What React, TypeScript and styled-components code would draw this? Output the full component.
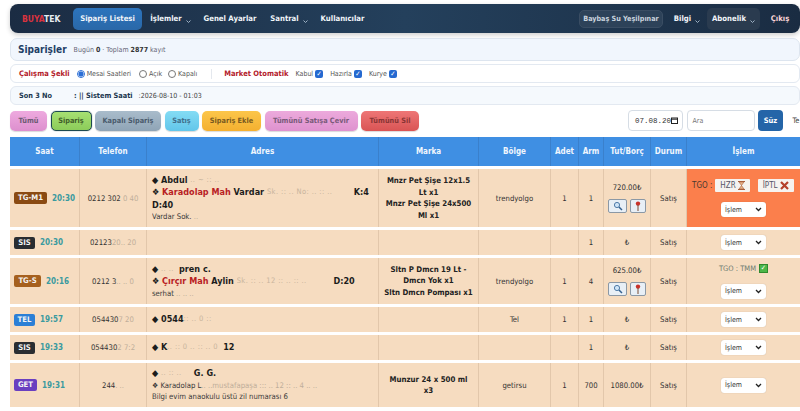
import React from "react";
import styled, { createGlobalStyle } from "styled-components";

const Global = createGlobalStyle`
  html, body { margin: 0; padding: 0; background: #fff; overflow: hidden; height: 411px; }
  body { font-family: "DejaVu Sans Condensed", "DejaVu Sans", Tahoma, sans-serif; font-size: 9px; color: #222; }
  * { box-sizing: border-box; }
`;
const Page = styled.div`
  width: 800px; height: 411px; overflow: hidden; padding: 4px 0 0 10px;
  display: flex; flex-direction: column;
`;
const Nav = styled.nav`
  width: 790px; height: 29px; flex: none; border-radius: 8px;
  background: linear-gradient(90deg, #1b2c43 0%, #24405c 50%, #1a2c42 100%);
  box-shadow: 0 2px 5px rgba(0,0,0,.2);
  display: flex; align-items: center; padding: 0 0 0 12px; color: #f2f6fa; font-weight: 700;
  font-size: 7.7px;
`;
const Logo = styled.div`font-size: 8.5px; font-weight: 700; color: #e8edf2; width: 51px; flex: none; span { color: #d9333f; }`;
const NavActive = styled.div`
  width: 69px; height: 22px; border-radius: 5px; background: linear-gradient(#2c74bd, #2a68a8);
  display: flex; align-items: center; justify-content: center; margin-right: 3px; flex: none;
`;
const NavItem = styled.div<{ $w: number; $box?: boolean; $red?: boolean }>`
  width: ${p => p.$w}px; height: 22px; display: flex; align-items: center; justify-content: center;
  border-radius: 5px; flex: none; white-space: nowrap;
  ${p => p.$box ? "background: #2a3b4f;" : ""}
  ${p => p.$red ? "color: #fbd5d8;" : ""}
`;
const CaretSvg = styled.svg`margin: 5px 0 0 4px; flex: none;`;
const Caret = () => <CaretSvg width="5" height="3" viewBox="0 0 5 3"><path d="M.5.5l2 2 2-2" fill="none" stroke="#9fb2c5" strokeWidth="1" /></CaretSvg>;
const NavSpacer = styled.div`flex: 1;`;
const UserBox = styled.div`
  width: 84px; height: 18px; border: 1px solid #3a4d63; background: #2d4259; border-radius: 5px; flex: none;
  display: flex; align-items: center; justify-content: center; color: #c9d3de; white-space: nowrap;
  font-weight: 700; font-size: 7.2px; margin-right: 4px;
`;
const Head = styled.div`
  width: 790px; height: 23px; flex: none; margin-top: 5px; border-radius: 7px; border: 1px solid #dde5ef;
  background: #f1f6fd; display: flex; align-items: center; gap: 7px; padding-left: 7px;
  h1 { margin: 0; font-size: 10px; color: #1f3f66; font-weight: 700; }
  span { font-size: 7px; color: #667; }
  b { color: #333; }
`;
const Bar = styled.div<{ $bg?: string }>`
  width: 790px; height: 19px; flex: none; margin-top: 3px; border-radius: 6px; border: 1px solid #e3e9f1;
  background: ${p => p.$bg || "#fff"}; display: flex; align-items: center; padding-left: 8px; font-size: 7px; color: #555;
  white-space: nowrap;
`;
const RedLabel = styled.b`color: #b3202a; font-size: 7.5px;`;
const Radio = styled.span<{ $on?: boolean; $ml: number }>`
  width: 8px; height: 8px; border-radius: 50%; border: 1px solid ${p => p.$on ? "#2c6fd6" : "#777"};
  background: ${p => p.$on ? "radial-gradient(#2c6fd6 55%, #fff 65%)" : "#fff"}; display: inline-block; margin: 0 2px 0 ${p => p.$ml}px; flex: none;
`;
const Check = styled.span<{ $mr: number }>`
  width: 8px; height: 8px; border-radius: 2px; background: #2569d0; color: #fff; font-size: 7px; line-height: 8px; text-align: center;
  display: inline-block; margin: 0 ${p => p.$mr}px 0 2px; flex: none;
`;
const VLine = styled.span`width: 1px; height: 10px; background: #e4e8ee; margin: 0 12px 0 14px; flex: none;`;
const BoldDark = styled.b<{ $w?: number }>`color: #20364f; font-size: 7.3px; ${p => p.$w ? `width: ${p.$w}px;` : ""}`;
const ClockText = styled.span`margin-left: 6px; font-size: 7px; color: #444;`;
const AutoGap = styled.span`width: 7px; flex: none;`;
const Toolbar = styled.div`
  width: 800px; height: 21px; flex: none; margin-top: 5px; display: flex; align-items: center; gap: 3.5px; white-space: nowrap;
`;
const ToolSpace = styled.span`width: 202px; flex: none;`;
const Btn = styled.div<{ $w: number; $bg: string; $fg: string; $sel?: boolean }>`
  width: ${p => p.$w}px; height: 20px; flex: none; border-radius: 5px; background: ${p => p.$bg};
  display: flex; align-items: center; justify-content: center; font-weight: 700; font-size: 7.3px; color: ${p => p.$fg};
  ${p => p.$sel ? "border: 1px solid #1d4a50; box-shadow: 0 0 1px #1d4a50;" : "box-shadow: 0 1px 1px rgba(0,0,0,.15);"}
`;
const DateBox = styled.div`
  width: 55px; height: 21px; border: 1px solid #d6dde5; border-radius: 4px; flex: none; background: #fff;
  display: flex; align-items: center; padding-left: 6px; font-size: 7.5px; color: #333; overflow: hidden;
  font-family: "Liberation Mono", monospace;
`;
const SearchBox = styled.div`
  width: 68px; height: 21px; border: 1px solid #d6dde5; border-radius: 4px; flex: none; background: #fff;
  display: flex; align-items: center; padding-left: 5px; font-size: 7px; color: #777;
`;
const FilterBtn = styled.div`
  width: 25px; height: 21px; background: #2465a8; color: #fff; font-weight: 700; font-size: 7.5px; border-radius: 4px; flex: none;
  display: flex; align-items: center; justify-content: center;
`;
const Truncated = styled.span`font-size: 7.5px; color: #444; margin-left: 6px; flex: none;`;
const TableWrap = styled.div`width: 790px; flex: none; margin-top: 6px;`;
const Table = styled.table`
  width: 790px; table-layout: fixed; border-collapse: separate; border-spacing: 0 3px; margin-top: -3px;
  th { background: #3f8fe3; color: #f0f6fd; font-weight: 700; font-size: 8px; height: 29px; border-right: 1px solid #3a80cc; padding: 0; }
  th:last-child, td:last-child { border-right: none; }
  td { background: #f6dcc0; border-right: 1px solid #e2c7ab; text-align: center; font-size: 7.7px; color: #333; padding: 0; vertical-align: middle; }
`;
const Time = styled.div`display: flex; align-items: center; gap: 5px; padding-left: 4px; color: #3a9a9f; font-weight: 700; font-size: 8px;`;
const Badge = styled.span<{ $bg: string; $w: number }>`
  background: ${p => p.$bg}; color: #f4f4f4; font-weight: 700; font-size: 7.7px; border-radius: 2px; width: ${p => p.$w}px; height: 12px; line-height: 12px;
  text-align: center; display: inline-block; white-space: nowrap; flex: none;
`;
const Address = styled.td`
  && { text-align: left; padding: 0 5px; line-height: 12.5px; font-size: 9px; color: #1c1c1c; font-weight: 700; white-space: nowrap; }
  em { font-style: normal; color: #b8201f; }
  small { display: block; font-size: 7.7px; font-weight: 400; color: #3a3a3a; line-height: 11.5px; overflow: hidden; }
`;
const Smudge = styled.span<{ $w: number }>`
  display: inline-block; width: ${p => p.$w}px; overflow: hidden; white-space: nowrap; vertical-align: bottom;
  color: #c8b49d; font-weight: 400; font-size: 7.5px; letter-spacing: .4px;
`;
const Faded = styled.span`color: #bfae9a;`;
const Brand = styled.td`&& { font-weight: 700; font-size: 7.8px; color: #222; line-height: 11.5px; padding: 0 1px; white-space: nowrap; }`;
const Center = styled.div`display: flex; flex-direction: column; align-items: center; gap: 7px;`;
const IconRow = styled.div`display: flex; gap: 3px;`;
const Tiny = styled.span<{ $w: number }>`
  width: ${p => p.$w}px; height: 14px; border: 1px solid #8b98a5; border-radius: 2px; background: #e8eff6; display: flex; align-items: center; justify-content: center;
`;
const Select = styled.div`
  width: 45px; height: 15px; background: #fff; border-radius: 3px; display: inline-flex; align-items: center; justify-content: space-between;
  padding: 0 4px; font-size: 7px; color: #333; box-shadow: 0 0 1px rgba(0,0,0,.25); vertical-align: middle;
`;
const Op = styled.td`&& { background: #fb7f4c; color: #4a3a30; }`;
const OpRow = styled.div`display: flex; align-items: center; gap: 8px; margin-bottom: 10px; padding-left: 5px;`;
const OpLabel = styled.span`display: flex; align-items: center; gap: 3px; font-size: 8px;`;
const Tag = styled.span`
  height: 13px; background: #f6f3ef; display: inline-flex; align-items: center; padding: 0 5px; gap: 2px; font-size: 8px; color: #556; border-radius: 1px;
`;
const TmmRow = styled.div`display: flex; align-items: center; justify-content: center; gap: 3px; margin-bottom: 11px; color: #6d7b70; font-size: 7.5px;`;
const GreenBox = styled.span`width: 9px; height: 9px; background: #4cb648; border: 1px solid #2f8a2d; color: #fff; font-size: 7px; line-height: 7px; text-align: center;`;

const ChevronS = () => <svg width="7" height="5" viewBox="0 0 7 5"><path d="M1 1l2.5 2.5L6 1" fill="none" stroke="#222" strokeWidth="1.3" /></svg>;
const Sel = () => <Select>İşlem<ChevronS /></Select>;
const Mag = () => <svg width="10" height="10" viewBox="0 0 10 10"><circle cx="4" cy="4" r="2.6" fill="#cfe5f8" stroke="#4f7ba8" /><path d="M6 6l3 3" stroke="#35618f" strokeWidth="1.5" /></svg>;
const Pin = () => <svg width="6" height="10" viewBox="0 0 6 10"><circle cx="3" cy="2.6" r="2.2" fill="#c8322a" /><path d="M3 4v6" stroke="#7a4a30" strokeWidth="1" /></svg>;
const Hourglass = () => <svg width="7" height="9" viewBox="0 0 7 9"><path d="M0 .5h7M0 8.5h7" stroke="#a9603c" /><path d="M1 1h5L3.5 4.5 6 8H1l2.5-3.5z" fill="#e8b48a" stroke="#a9603c" strokeWidth=".6" /></svg>;
const Cross = () => <svg width="9" height="9" viewBox="0 0 9 9"><path d="M1 1l7 7M8 1L1 8" stroke="#b5402a" strokeWidth="2.2" /></svg>;
const Cal = () => <svg width="7" height="7" viewBox="0 0 7 7"><rect x=".5" y="1" width="6" height="5.5" fill="#fff" stroke="#222" /><path d="M.5 2.2h6" stroke="#222" /></svg>;

export default function App() {
  return (
    <Page>
      <Global />
      <Nav>
        <Logo><span>BUYA</span>TEK</Logo>
        <NavActive>Sipariş Listesi</NavActive>
        <NavItem $w={51}>İşlemler<Caret /></NavItem>
        <NavItem $w={68}>Genel Ayarlar</NavItem>
        <NavItem $w={50}>Santral<Caret /></NavItem>
        <NavItem $w={57}>Kullanıcılar</NavItem>
        <NavSpacer />
        <UserBox>Baybaş Su Yeşilpınar</UserBox>
        <NavItem $w={40}>Bilgi<Caret /></NavItem>
        <NavItem $w={53} $box>Abonelik<Caret /></NavItem>
        <NavItem $w={40} $red>Çıkış</NavItem>
      </Nav>
      <Head><h1>Siparişler</h1><span>Bugün <b>0</b> · Toplam <b>2877</b> kayıt</span></Head>
      <Bar>
        <RedLabel>Çalışma Şekli</RedLabel>
        <Radio $on $ml={7} />Mesai Saatleri<Radio $ml={8} />Açık<Radio $ml={6} />Kapalı
        <VLine />
        <RedLabel>Market Otomatik</RedLabel>
        <AutoGap />Kabul<Check $mr={7}>✓</Check>Hazırla<Check $mr={7}>✓</Check>Kurye<Check $mr={0}>✓</Check>
      </Bar>
      <Bar $bg="#f5f9fd">
        <BoldDark $w={55}>Son 3 No</BoldDark>
        <BoldDark>: || Sistem Saati</BoldDark>
        <ClockText>:2026-08-10 - 01:03</ClockText>
      </Bar>
      <Toolbar>
        <Btn $w={37} $fg="#6c5a72" $bg="linear-gradient(#eeaadf,#dd8fce)">Tümü</Btn>
        <Btn $w={41} $fg="#41602a" $bg="linear-gradient(#a6e072,#8ccc5a)" $sel>Sipariş</Btn>
        <Btn $w={66} $fg="#4a5a6c" $bg="linear-gradient(#a9bccb,#8fa4b6)">Kapalı Sipariş</Btn>
        <Btn $w={34} $fg="#3f6f8c" $bg="linear-gradient(#84dcf4,#62c6ea)">Satış</Btn>
        <Btn $w={59} $fg="#7a5a20" $bg="linear-gradient(#fcc64a,#f4b030)">Sipariş Ekle</Btn>
        <Btn $w={93} $fg="#7a5a7a" $bg="linear-gradient(#ecaadc,#df92cf)">Tümünü Satışa Çevir</Btn>
        <Btn $w={58} $fg="#8a3535" $bg="linear-gradient(#ee7676,#d95454)">Tümünü Sil</Btn>
        <ToolSpace />
        <DateBox>07.08.20<Cal /></DateBox>
        <SearchBox>Ara</SearchBox>
        <FilterBtn>Süz</FilterBtn>
        <Truncated>Te</Truncated>
      </Toolbar>
      <TableWrap>
        <Table>
          <colgroup>
            <col style={{ width: 70 }} /><col style={{ width: 67 }} /><col style={{ width: 232 }} /><col style={{ width: 100 }} />
            <col style={{ width: 72 }} /><col style={{ width: 28 }} /><col style={{ width: 25 }} /><col style={{ width: 47 }} />
            <col style={{ width: 36 }} /><col style={{ width: 113 }} />
          </colgroup>
          <thead>
            <tr><th>Saat</th><th>Telefon</th><th>Adres</th><th>Marka</th><th>Bölge</th><th>Adet</th><th>Arm</th><th>Tut/Borç</th><th>Durum</th><th>İşlem</th></tr>
          </thead>
          <tbody>
            <tr style={{ height: 58 }}>
              <td><Time><Badge $bg="#8a4a12" $w={33}>TG-M1</Badge>20:30</Time></td>
              <td>0212 302 <Faded>0 40</Faded></td>
              <Address>◆ Abdul <Smudge $w={32}>.. ~ :: ..</Smudge><br />❖ <em>Karadolap Mah</em> Vardar <Smudge $w={84}>Sk. :: .. No: .. :: ..</Smudge> K:4<br />D:40<small>Vardar Sok. <Faded>..</Faded></small></Address>
              <Brand>Mnzr Pet Şişe 12x1.5<br />Lt x1<br />Mnzr Pet Şişe 24x500<br />Ml x1</Brand>
              <td>trendyolgo</td><td>1</td><td>1</td>
              <td><Center>720.00₺<IconRow><Tiny $w={19}><Mag /></Tiny><Tiny $w={16}><Pin /></Tiny></IconRow></Center></td>
              <td>Satış</td>
              <Op>
                <OpRow><OpLabel>TGO : <Tag>HZR <Hourglass /></Tag></OpLabel><Tag>İPTL <Cross /></Tag></OpRow>
                <Sel />
              </Op>
            </tr>
            <tr style={{ height: 25 }}>
              <td><Time><Badge $bg="#2a2d31" $w={21}>SIS</Badge>20:30</Time></td>
              <td>02123<Faded>20.. 20</Faded></td><Address /><Brand /><td /><td /><td>1</td><td>₺</td><td>Satış</td>
              <td><Sel /></td>
            </tr>
            <tr style={{ height: 46 }}>
              <td><Time><Badge $bg="#a6601e" $w={27}>TG-S</Badge>20:16</Time></td>
              <td>0212 3<Faded>.. .. 0</Faded></td>
              <Address>◆ <Smudge $w={18}>.. ..</Smudge>pren c.<br />❖ <em>Çırçır Mah</em> Aylin <Smudge $w={94}>Sk. :: .. 12 :: .. :: ..</Smudge> D:20<small>serhat <Faded>.. .. ..</Faded></small></Address>
              <Brand>Sltn P Dmcn 19 Lt -<br />Dmcn Yok x1<br />Sltn Dmcn Pompası x1</Brand>
              <td>trendyolgo</td><td>1</td><td>4</td>
              <td><Center>625.00₺<IconRow><Tiny $w={19}><Mag /></Tiny><Tiny $w={16}><Pin /></Tiny></IconRow></Center></td>
              <td>Satış</td>
              <td><TmmRow>TGO : TMM <GreenBox>✓</GreenBox></TmmRow><Sel /></td>
            </tr>
            <tr style={{ height: 25 }}>
              <td><Time><Badge $bg="#2b7fd6" $w={21}>TEL</Badge>19:57</Time></td>
              <td>054430<Faded>7 20</Faded></td>
              <Address>◆ 0544<Smudge $w={40}>:: .. 0 ::</Smudge></Address>
              <Brand /><td>Tel</td><td>1</td><td>1</td><td>₺</td><td>Satış</td><td><Sel /></td>
            </tr>
            <tr style={{ height: 25 }}>
              <td><Time><Badge $bg="#2a2d31" $w={21}>SIS</Badge>19:33</Time></td>
              <td>054430<Faded>2 7:2</Faded></td>
              <Address>◆ K<Smudge $w={53}>.. :: 0 .. :: .. 0</Smudge> 12</Address>
              <Brand /><td /><td /><td>1</td><td>₺</td><td>Satış</td><td><Sel /></td>
            </tr>
            <tr style={{ height: 44 }}>
              <td><Time><Badge $bg="#6a3fc0" $w={23}>GET</Badge>19:31</Time></td>
              <td>244<Faded>. ..</Faded></td>
              <Address>◆ <Smudge $w={30}>.. :: ..</Smudge> G. G.<small>❖ Karadolap L<Faded>..  ..mustafapaşa ::: .. 12 :: .. 4 .. ..</Faded></small><small>Bilgi evim anaokulu üstü zil numarası 6</small></Address>
              <Brand>Munzur 24 x 500 ml<br />x3</Brand>
              <td>getirsu</td><td>1</td><td>700</td><td>1080.00₺</td><td>Satış</td><td><Sel /></td>
            </tr>
          </tbody>
        </Table>
      </TableWrap>
    </Page>
  );
}
